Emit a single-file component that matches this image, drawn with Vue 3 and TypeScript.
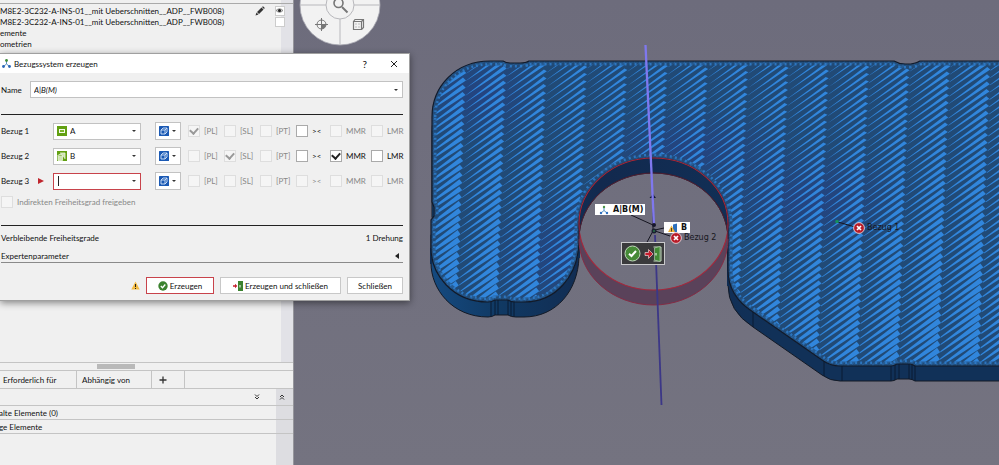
<script setup lang="ts">
import { ref } from 'vue'

interface Flag {
  key: string
  label: string
  checked: boolean
  disabled: boolean
}
interface DatumRow {
  label: string
  value: string
  kind: 'plane' | 'cylinder' | 'empty'
  flags: Flag[]
}

const flagLabels = ['[PL]', '[SL]', '[PT]', '><', 'MMR', 'LMR']
const makeFlags = (checked: number[], enabled: number[]): Flag[] =>
  flagLabels.map((label, i) => ({
    key: label,
    label,
    checked: checked.includes(i),
    disabled: !enabled.includes(i),
  }))

const name = ref('A|B(M)')
const indirect = ref(false)
const rows = ref<DatumRow[]>([
  { label: 'Bezug 1', value: 'A', kind: 'plane', flags: makeFlags([0], [3]) },
  { label: 'Bezug 2', value: 'B', kind: 'cylinder', flags: makeFlags([1, 4], [3, 4, 5]) },
  { label: 'Bezug 3', value: '', kind: 'empty', flags: makeFlags([], []) },
])

const partName = 'M8E2-3C232-A-INS-01__mit Ueberschnitten__ADP__FWB008)'

// Outline of the part's top face; the side walls are the same outline moved down.
const face =
  'M432 117 C432 86 456 61 490 61 L503 61 Q506 63 510 63 L520 63 Q526 63 529 61 L894 61 ' +
  'Q899 64 905 64 L911 64 Q917 63 920 61 L1400 61 L1400 366 L915 366 Q912 364 909 364 L897 364 Q894 366 891 366 ' +
  'L840 366 Q830 366 822 360 L753 312 Q728 296 728 270 L728 224 ' +
  'A74.5 66 0 0 0 579 224 L579 242 C578 276 556 302 524 302 L516 302 Q511 302 508 300 L495 300 Q492 302 488 302 ' +
  'C452 302 431 274 431 248 L431 220 L434 216 L434 207 L432 202 Z'

// Hatching: tapered strokes in slightly leaning columns, thicker near the corners.
const hatch = (() => {
  const parts: string[] = []
  const pitch = 7.3
  for (let c = 0; c < 25; c++) {
    for (let r = -6; r < 50; r++) {
      const y = 58 + r * pitch + ((c * 3) % 7)
      const x = 464 + c * 40.3 - (y - 80) * 0.035
      const left = Math.max(0, (580 - x) / 120)
      const low = Math.max(0, (y - 130) / 190)
      const right = Math.max(0, (x - 860) / 130)
      const end = Math.min(6.4, 3.4 + left * 1.7 + low * 2.2 + right * 1.2)
      const start = Math.min(2.2, 0.2 + low * 0.8 + right * 0.3)
      const x0 = x - 39
      const y0 = y + 27
      parts.push(
        `M${x0.toFixed(1)} ${(y0 - start / 2).toFixed(1)}L${(x - 14).toFixed(1)} ${(y + 9.7 - end * 0.42).toFixed(1)}` +
          `L${(x - 1).toFixed(1)} ${(y - end / 2).toFixed(1)}` +
          `L${(x + 2).toFixed(1)} ${(y + end / 2 - 2).toFixed(1)}L${(x - 1).toFixed(1)} ${(y + end / 2).toFixed(1)}` +
          `L${x0.toFixed(1)} ${(y0 + start / 2).toFixed(1)}Z`,
      )
    }
  }
  return parts.join('')
})()

const seams = [
  'M491 302V317', 'M495 300V315', 'M498 300V315', 'M508 300V315', 'M511 301V316', 'M514 302V317',
  'M753 312V327', 'M824 361V376', 'M842 366V381', 'M891 366V381', 'M895 365V380', 'M899 364V379',
  'M909 364V379', 'M912 365V380', 'M915 366V381',
].join('')
</script>

<template>
  <main class="app">
    <aside class="panel">
      <section class="tree">
        <div class="tree-row">
          <span>{{ partName }}</span>
          <svg class="pencil" viewBox="0 0 10 10" width="10" height="10" aria-hidden="true">
            <path d="M0.5 9.5L1.5 6.5L3.5 8.5Z M2 6L6.5 1.5L8.5 3.5L4 8Z M7 1L8 0.2L9.8 2L9 3Z" fill="#333" />
          </svg>
          <button class="vis" type="button" aria-label="Sichtbar">
            <svg viewBox="0 0 9 9" width="9" height="9" aria-hidden="true">
              <path d="M1 4.500Q4.500 1 8 4.500Q4.500 8 1 4.500Z" fill="#ccc" stroke="#777" stroke-width="0.800" />
              <circle cx="4.500" cy="4.500" r="1.500" fill="#222" />
            </svg>
          </button>
        </div>
        <div class="tree-row">
          <span>{{ partName }}</span>
          <button class="vis" type="button" aria-label="Unsichtbar"></button>
        </div>
        <div class="tree-row">emente</div>
        <div class="tree-row">ometrien</div>
      </section>
      <section class="lower">
        <div class="scroll"><i class="thumb"></i></div>
        <nav class="tabs">
          <button type="button" class="tab first">Erforderlich für</button>
          <button type="button" class="tab">Abhängig von</button>
          <button type="button" class="tab plus" aria-label="Hinzufügen">
            <svg viewBox="0 0 8 8" width="8" height="8"><path d="M4 0.500V7.500M0.500 4H7.500" stroke="#333" stroke-width="1.300" /></svg>
          </button>
        </nav>
        <div class="fold">
          <button type="button" aria-label="Aufklappen">
            <svg viewBox="0 0 6 6" width="6" height="6"><path d="M1 0.500L3 2.500L5 0.500M1 3L3 5L5 3" fill="none" stroke="#333" /></svg>
          </button>
          <button type="button" aria-label="Zuklappen">
            <svg viewBox="0 0 6 6" width="6" height="6"><path d="M1 3L3 1L5 3M1 5.500L3 3.500L5 5.500" fill="none" stroke="#333" /></svg>
          </button>
        </div>
        <div class="group">alte Elemente (0)</div>
        <div class="group">ge Elemente</div>
        <div class="rest"></div>
      </section>
    </aside>

    <section class="scene">
      <svg class="part" viewBox="294 0 705 465" preserveAspectRatio="xMinYMin slice" aria-hidden="true">
        <defs>
          <clipPath id="faceClip"><path :d="face" /></clipPath>
          <linearGradient id="wall" gradientUnits="userSpaceOnUse" x1="431" x2="999" y1="0" y2="0">
            <stop offset="0" stop-color="#154a80" />
            <stop offset="0.120" stop-color="#103963" />
            <stop offset="0.300" stop-color="#12294e" />
            <stop offset="0.600" stop-color="#113158" />
          </linearGradient>
          <radialGradient id="haze"><stop offset="0" stop-color="#2a3894" stop-opacity="0.350" /><stop offset="1" stop-color="#2a3894" stop-opacity="0" /></radialGradient>
        </defs>
        <path :d="face" transform="translate(0 15)" fill="url(#wall)" stroke="#141a26" />
        <path d="M431 248V264M579 224V258M728 224V286" stroke="#0f2c52" stroke-width="2" />
        <path :d="face" fill="#214a76" />
        <g clip-path="url(#faceClip)">
          <ellipse cx="570" cy="255" rx="90" ry="70" fill="url(#haze)" />
          <ellipse cx="690" cy="150" rx="110" ry="45" fill="url(#haze)" />
          <ellipse cx="810" cy="200" rx="110" ry="55" fill="url(#haze)" />
          <ellipse cx="480" cy="95" rx="70" ry="50" fill="url(#haze)" />
          <path :d="hatch" fill="#3186dc" />
          <path :d="face" fill="none" stroke="#224b78" stroke-width="9" stroke-opacity="0.700" />
          <path :d="face" fill="none" stroke="#2f7fd0" stroke-width="9" stroke-dasharray="2 3" stroke-opacity="0.800" />
          <path :d="face" fill="none" stroke="#23507f" stroke-width="4" stroke-dasharray="3 2" />
        </g>
        <path :d="face" fill="none" stroke="#131a28" stroke-width="1.200" />
        <path :d="seams" stroke="#0a1930" stroke-width="0.900" />
        <path d="M579 224A74.500 66 0 0 0 728 224V239A74.500 66 0 0 1 579 239Z" fill="#5a425a" />
        <ellipse cx="653.500" cy="224" rx="74.500" ry="66" fill="none" stroke="#a5283c" stroke-width="1.100" />
        <path d="M579 239A74.500 66 0 0 0 728 239" fill="none" stroke="#842d45" />
        <path d="M579 239A74.500 66 0 0 1 728 239" fill="none" stroke="#571f35" stroke-width="0.900" />
        <path d="M655 235L661.500 405" stroke="#3c3787" stroke-width="1.800" />
        <path d="M653 197V232M631 215L653 225M653 231L646 244M655 230L664 228M655 231L673 237M838 222L855 227" stroke="#151520" fill="none" />
        <path d="M649.500 198H656L653 194Z" fill="#111733" />
        <path d="M645.500 45L654 226" stroke="#7f78ee" stroke-width="2.300" />
        <circle cx="654" cy="225" r="2" fill="#17172b" />
        <circle cx="654" cy="231" r="2.500" fill="#1c2131" />
        <circle cx="654" cy="231" r="1" fill="#267047" />
        <circle cx="837" cy="221.500" r="1.800" fill="#16905b" />
        <g>
          <circle cx="340" cy="5" r="40" fill="#f2f2f2" stroke="#aaa9b2" stroke-width="0.800" />
          <path d="M300 5H380M340 5V45" stroke="#b8b8bc" />
          <circle cx="340" cy="5" r="14" fill="#f2f2f2" stroke="#b8b8bc" />
          <circle cx="338.500" cy="3" r="4.500" fill="none" stroke="#777" stroke-width="1.600" />
          <path d="M342 7L347.500 12.500" stroke="#777" stroke-width="2" />
          <circle cx="321.500" cy="24.500" r="4.500" fill="none" stroke="#777" />
          <path d="M315 24.500H328M321.500 18V31" stroke="#777" />
          <path d="M321.500 24.500H326A4.500 4.500 0 0 1 321.500 29Z" fill="#777" />
          <path d="M353.500 21.500H361.500V29.500H353.500ZM353.500 21.500L355 19.500H363.500V27.500L361.500 29.500M361.500 21.500L363.500 19.500" fill="none" stroke="#777" stroke-width="1.200" />
          <path d="M355.500 24H356.500M358.500 24H359.500M355.500 27H356.500M358.500 27H359.500" stroke="#888" />
        </g>
      </svg>

      <div class="tag system">
        <svg viewBox="0 0 10 10" width="10" height="10" aria-hidden="true">
          <path d="M5 2V5.500L2 8M5 5.500L8 8" fill="none" stroke="#4f92c8" />
          <circle cx="5" cy="2" r="1.200" fill="#4a9144" /><circle cx="2" cy="8" r="1.200" fill="#2e6fc0" /><circle cx="8" cy="8" r="1.200" fill="#2e6fc0" />
        </svg>
        <b>A|B(M)</b>
      </div>
      <div class="tag datum">
        <svg viewBox="0 0 10 10" width="10" height="10" aria-hidden="true">
          <path d="M5 1.500L9 0.500V9H5Z" fill="#2e70bd" />
          <path d="M3.500 2.500L7 9H0Z" fill="#efb43a" /><path d="M3.500 5V8.500" stroke="#222" stroke-width="0.800" />
        </svg>
        <b>B</b>
      </div>
      <div class="pin two">
        <svg viewBox="0 0 12 12" width="12" height="12" aria-hidden="true">
          <circle cx="6" cy="6" r="5.400" fill="#b81c28" stroke="#e7d5da" stroke-width="0.900" /><path d="M4 4L8 8M8 4L4 8" stroke="#fff" stroke-width="1.700" />
        </svg>
        Bezug 2
      </div>
      <div class="pin one">
        <svg viewBox="0 0 12 12" width="12" height="12" aria-hidden="true">
          <circle cx="6" cy="6" r="5.400" fill="#b81c28" stroke="#e7d5da" stroke-width="0.900" /><path d="M4 4L8 8M8 4L4 8" stroke="#fff" stroke-width="1.700" />
        </svg>
        Bezug 1
      </div>
      <div class="quick">
        <button type="button" aria-label="Erzeugen">
          <svg viewBox="0 0 17 17" width="17" height="17"><circle cx="8.500" cy="8.500" r="7.500" fill="#468a37" stroke="#bfd6ba" /><path d="M5 8.800L7.500 11L12 6" fill="none" stroke="#fff" stroke-width="2" /></svg>
        </button>
        <button type="button" aria-label="Erzeugen und schließen">
          <svg viewBox="0 0 18 18" width="18" height="18"><path d="M1 7.500H4.500V4.500L9 9L4.500 13.500V10.500H1Z" fill="#c61c2c" stroke="#ead3d5" stroke-width="0.700" /><path d="M9.500 2H17V16H9.500" fill="none" stroke="#bdd9b8" /><path d="M10.500 3L16 1.500V16.500L10.500 15Z" fill="#438a36" stroke="#bdd9b8" stroke-width="0.600" /><path d="M12 8V10.500" stroke="#fff" /></svg>
        </button>
      </div>
    </section>

    <form class="dialog" @submit.prevent>
      <header class="title">
        <svg viewBox="0 0 9 9" width="9" height="9" aria-hidden="true">
          <path d="M4.500 1.500V5L1.500 7.500M4.500 5L7.500 7.500" fill="none" stroke="#5a8fc4" />
          <circle cx="4.500" cy="1.500" r="1.400" fill="#3d8a3a" /><circle cx="1.500" cy="7.500" r="1.400" fill="#2a66b8" /><circle cx="7.500" cy="7.500" r="1.400" fill="#2a66b8" />
        </svg>
        <h1>Bezugssystem erzeugen</h1>
        <button type="button" class="win">?</button>
        <button type="button" class="win" aria-label="Dialog schließen">
          <svg viewBox="0 0 8 8" width="8" height="8"><path d="M1 1L7 7M7 1L1 7" stroke="#222" /></svg>
        </button>
      </header>
      <div class="body">
        <div class="name">
          <label for="sysname">Name</label>
          <div class="field">
            <input id="sysname" v-model="name" class="italic" type="text" />
            <i class="caret"></i>
          </div>
        </div>
        <hr />
        <div class="rows">
          <div v-for="(row, i) in rows" :key="row.label" class="row">
            <label class="row-label" :for="`datum${i}`">
              {{ row.label }}
              <svg v-if="row.kind === 'empty'" viewBox="0 0 6 6" width="6" height="6" aria-hidden="true"><path d="M0 0L6 3L0 6Z" fill="#c0262e" /></svg>
            </label>
            <div class="field combo" :class="{ error: row.kind === 'empty' }">
              <svg v-if="row.kind !== 'empty'" class="kind" viewBox="0 0 10 10" width="10" height="10" aria-hidden="true">
                <rect width="10" height="10" fill="#62a012" />
                <rect v-if="row.kind === 'plane'" x="2.500" y="3.500" width="5" height="3" fill="#7db52c" stroke="#f4fae8" />
                <path v-else d="M1 4.500V9.500H5.500V4.500M1 4.500A2.300 1.300 0 0 1 5.500 4.500A2.300 1.300 0 0 1 1 4.500M3 2H8V8" fill="#e9f3da" fill-opacity="0.800" stroke="#e9f3da" stroke-width="0.800" />
              </svg>
              <select v-if="row.kind !== 'empty'" :id="`datum${i}`" v-model="row.value">
                <option>A</option>
                <option>B</option>
              </select>
              <template v-else>
                <i class="cursor"></i>
                <input :id="`datum${i}`" v-model="row.value" type="text" />
              </template>
              <i class="caret"></i>
            </div>
            <button type="button" class="mode" :aria-label="`${row.label} Auswahlmodus`">
              <svg viewBox="0 0 10 10" width="10" height="10"><rect width="10" height="10" rx="0.500" fill="#1a59b4" /><path d="M2 4H6V8H2ZM2 4L4 2H8V6L6 8M6 4L8 2" fill="none" stroke="#d5e4f8" stroke-width="0.900" /></svg>
              <i class="caret"></i>
            </button>
            <label v-for="flag in row.flags" :key="flag.key" class="check" :class="{ off: flag.disabled }">
              <input v-model="flag.checked" type="checkbox" :disabled="flag.disabled" />
              {{ flag.label }}
            </label>
          </div>
        </div>
        <label class="check indirect off">
          <input v-model="indirect" type="checkbox" disabled />
          Indirekten Freiheitsgrad freigeben
        </label>
        <hr />
        <div class="info"><span>Verbleibende Freiheitsgrade</span><span>1 Drehung</span></div>
        <button type="button" class="expert">
          Expertenparameter
          <svg viewBox="0 0 4 6" width="4" height="6"><path d="M4 0V6L0 3Z" fill="#222" /></svg>
        </button>
        <footer class="actions">
          <svg viewBox="0 0 9 9" width="9" height="9" aria-hidden="true"><path d="M4.500 0.500L8.700 8.500H0.300Z" fill="#f3bb42" /><path d="M4.500 3V6M4.500 7V8" stroke="#222" /></svg>
          <button type="submit" class="btn create">
            <svg viewBox="0 0 10 10" width="10" height="10" aria-hidden="true"><circle cx="5" cy="5" r="4.700" fill="#3b822e" /><path d="M2.800 5L4.500 6.700L7.300 3.500" fill="none" stroke="#fff" stroke-width="1.300" /></svg>
            Erzeugen
          </button>
          <button type="button" class="btn both">
            <svg viewBox="0 0 10 10" width="10" height="10" aria-hidden="true"><path d="M0 4.300H2V2.800L4.300 5L2 7.200V5.700H0Z" fill="#c41f2d" /><rect x="5" width="5" height="10" fill="#3b822e" /><path d="M7 4V6.500" stroke="#fff" /></svg>
            Erzeugen und schließen
          </button>
          <button type="button" class="btn close">Schließen</button>
        </footer>
      </div>
    </form>
  </main>
</template>

<style>
body {
  margin: 0;
  background: #706f7d;
}
</style>

<style scoped>
.app {
  position: relative;
  display: grid;
  grid-template-columns: 294px 1fr;
  min-height: 100vh;
  overflow: hidden;
  font: 8px/12px Lato, "Open Sans", sans-serif;
  color: #111;
}
* {
  box-sizing: border-box;
}
button,
input,
select {
  margin: 0;
  padding: 0;
  border: 0;
  border-radius: 0;
  background: none;
  color: inherit;
  font: inherit;
}
svg {
  display: block;
  flex: none;
}
.panel {
  display: flex;
  flex-direction: column;
  justify-content: space-between;
  background: linear-gradient(90deg, #f0f0f0 281px, #e2e2e7 281px);
  border-right: 1px solid #96969c;
}
.tree {
  display: grid;
  grid-auto-rows: 11px;
  padding-top: 1px;
  margin-top: 3px;
  border-top: 1px solid #aaa;
}
.tree-row {
  display: flex;
  align-items: center;
  white-space: nowrap;
}
.tree-row span {
  flex: 1;
}
.pencil {
  margin-right: 10px;
}
.vis {
  width: 10px;
  height: 10px;
  margin-right: 8px;
  background: #fff;
  border: 1px solid #ccc;
}
.vis svg {
  margin: -1px;
}
.lower {
  border-top: 1px solid #c4c4c4;
  background: #f0f0f0;
}
.scroll {
  height: 8px;
  padding: 1px 97px;
  border-bottom: 1px solid #c4c4c4;
}
.thumb {
  display: block;
  width: 38px;
  height: 5px;
  background: #b9b9b9;
}
.tabs {
  display: flex;
  height: 18px;
  border-bottom: 1px solid #c4c4c4;
}
.tab {
  width: 75px;
  padding-left: 5px;
  border-right: 1px solid #c4c4c4;
  text-align: left;
}
.first {
  width: 77px;
  padding-left: 3px;
}
.plus {
  width: 33px;
  padding-left: 7px;
}
.fold {
  display: flex;
  justify-content: flex-end;
  align-items: center;
  gap: 19px;
  height: 17px;
  padding-right: 8px;
  border-bottom: 1px solid #c4c4c4;
  background: linear-gradient(90deg, #f0f0f0 276px, #dddde1 276px);
}
.group {
  height: 14px;
  border-bottom: 1px solid #c4c4c4;
  background: linear-gradient(90deg, #f0f0f0 276px, #dddde1 276px);
  line-height: 14px;
  text-indent: -1px;
}
.rest {
  height: 31px;
  background: linear-gradient(90deg, #f0f0f0 276px, #dddde1 276px);
}
.scene {
  position: relative;
  overflow: hidden;
  background: linear-gradient(#6d6c7c, #747380);
}
.part {
  position: absolute;
  width: 100%;
  height: 100%;
}
.tag,
.pin,
.quick {
  position: absolute;
  display: flex;
  align-items: center;
  font-family: "DejaVu Sans", sans-serif;
}
.tag {
  height: 11px;
  background: #fff;
  color: #111;
}
.system {
  left: 301px;
  top: 204px;
  gap: 4px;
  padding: 0 2px 0 4px;
}
.datum {
  left: 370px;
  top: 222px;
  gap: 3px;
  padding: 0 3px 0 4px;
}
.pin {
  gap: 2px;
  color: #17171d;
}
.two {
  left: 376px;
  top: 232px;
}
.one {
  left: 559px;
  top: 222px;
}
.quick {
  left: 327px;
  top: 242px;
  height: 23px;
  gap: 3px;
  padding: 0 2px;
  background: #3a3a3c;
  border: 1px solid #c9c9cc;
}
.dialog {
  position: absolute;
  left: 0;
  top: 53px;
  width: 410px;
  background: #f0f0f0;
  border: 1px solid #a0a0a0;
  border-left: 0;
  box-shadow: 0 2px 7px rgba(0, 0, 0, 0.45);
}
.title {
  display: flex;
  align-items: center;
  height: 19px;
  padding: 0 11px 0 2px;
  background: #fff;
}
h1 {
  flex: 1;
  margin: 0 0 0 3px;
  font-size: 8px;
  font-weight: 400;
}
.win {
  margin-left: 23px;
  font-size: 10px;
}
.body {
  padding: 8px 6px 6px 1px;
}
.name {
  display: flex;
  align-items: center;
}
.name label {
  width: 29px;
}
.field {
  position: relative;
  display: flex;
  align-items: center;
  flex: 1;
  height: 17px;
  background: #fff;
  border: 1px solid #c2c2c2;
}
.field input,
.field select {
  flex: 1;
  min-width: 0;
  height: 15px;
  padding-left: 3px;
  appearance: none;
  outline: 0;
}
.italic {
  font-style: italic;
}
.caret {
  flex: none;
  width: 4px;
  margin-right: 4px;
  border: 2px solid transparent;
  border-top: 2px solid #333;
  border-bottom: 0;
}
hr {
  height: 1px;
  margin: 16px 0 7px;
  border: 0;
  background: #222;
}
.rows {
  display: grid;
  gap: 7px;
}
.row {
  display: grid;
  grid-template-columns: 52px 102px 33px 36px 36px 36px 34px 41px 1fr;
  align-items: center;
  height: 18px;
}
.row-label {
  display: flex;
  align-items: center;
  gap: 9px;
}
.combo {
  width: 88px;
}
.error {
  border-color: #c8434b;
}
.kind {
  margin-left: 3px;
}
.cursor {
  width: 1px;
  height: 10px;
  margin-left: 4px;
  background: #222;
}
.mode {
  display: flex;
  align-items: center;
  justify-content: space-between;
  width: 26px;
  height: 18px;
  padding-left: 3px;
  background: #fff;
  border: 1px solid #c2c2c2;
}
.check {
  display: flex;
  align-items: center;
  gap: 4px;
  white-space: nowrap;
}
.check input {
  display: grid;
  place-items: center;
  flex: none;
  width: 12px;
  height: 12px;
  appearance: none;
  background: #fff;
  border: 1px solid #aaa;
}
.check input:checked::before {
  content: "";
  width: 4px;
  height: 6px;
  margin-top: -2px;
  border: solid #222;
  border-width: 0 2px 2px 0;
  transform: rotate(42deg);
}
.off {
  color: #888;
}
.check input:disabled {
  background: #f5f5f5;
  border-color: #dedede;
}
.check input:disabled:checked::before {
  border-color: #999;
}
.indirect {
  margin-top: 6px;
  padding-bottom: 1px;
}
.info {
  display: flex;
  justify-content: space-between;
  margin-top: -1px;
}
.expert {
  display: flex;
  align-items: center;
  justify-content: space-between;
  width: 100%;
  height: 18px;
  margin-top: 1px;
  padding: 5px 4px 1px 0;
  border-bottom: 1px solid #8a8a8a;
}
.actions {
  display: flex;
  align-items: center;
  justify-content: flex-end;
  gap: 6px;
  margin-top: 14px;
}
.btn {
  display: flex;
  align-items: center;
  justify-content: center;
  gap: 2px;
  height: 17px;
  background: #fff;
  border: 1px solid #c8c8c8;
}
.create {
  width: 68px;
  border-color: #c8434b;
}
.both {
  width: 121px;
}
.close {
  width: 56px;
}
</style>
